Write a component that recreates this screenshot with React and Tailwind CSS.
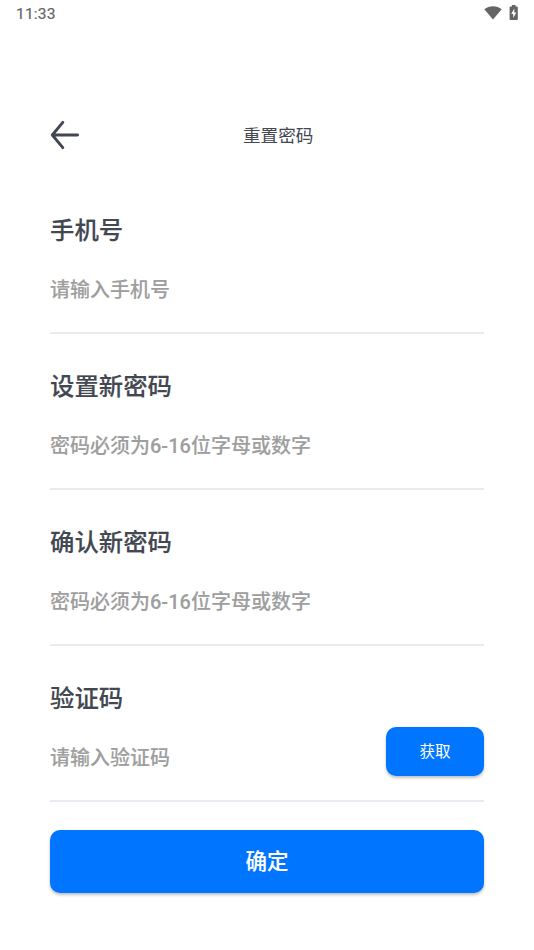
import React from "react";

const fields = [
  { label: "手机号", hint: "请输入手机号", line: "border-[#ebebeb]" },
  { label: "设置新密码", hint: "密码必须为6-16位字母或数字", line: "border-[#e8ebef]" },
  { label: "确认新密码", hint: "密码必须为6-16位字母或数字", line: "border-[#ebebed]" },
  { label: "验证码", hint: "请输入验证码", line: "border-[#e9eaf2]", action: "获取" },
];

function StatusBar() {
  return (
    <div className="flex h-7 items-center justify-between pl-4 pr-[15px] text-[#646464]">
      <span className="text-[15.5px] leading-7 font-normal tracking-[0.2px] [-webkit-text-stroke:0.2px]">11:33</span>
      <div className="flex items-start gap-[7px] pb-[2px]">
        <svg className="mt-[1px]" width="18" height="14" viewBox="0 0 18 14" fill="currentColor">
          <path d="M0.3 3.3C5.2-.8 12.800-.8 17.700 3.300L9 13.500Z" />
        </svg>
        <svg width="10" height="16" viewBox="0 0 10 16">
          <path
            d="M2.900 0h3.600v1.600H8q.8 0 .8 .8v11.800q0 .8-.8 .8H1.400q-.8 0-.8-.8V2.400q0-.8.8-.8h1.500Z"
            fill="currentColor"
          />
          <path d="M5.300 3.500 2.200 9h2v4l3.100-5.600h-2Z" fill="#fff" />
        </svg>
      </div>
    </div>
  );
}

function Field({ label, hint, line, action }) {
  return (
    <section className={`flex h-[156px] flex-col border-b-2 pt-[33px] ${line}`}>
      <label className="h-10 text-[24.4px] leading-10 font-medium text-[#424752] [-webkit-text-stroke:0.15px]">
        {label}
      </label>
      <div className="mt-[19px] flex h-10 items-center justify-between">
        <span className="text-[20px] leading-10 font-medium text-[#9e9e9e] [-webkit-text-stroke:0.1px]">{hint}</span>
        {action && (
          <button className="-mt-[13px] h-[49px] w-[98px] rounded-[10px] bg-[#0075ff] pt-[2px] text-[15.6px] leading-[47px] text-white shadow-[0_2px_3px_rgba(0,0,0,0.25)]">
            {action}
          </button>
        )}
      </div>
    </section>
  );
}

export default function App() {
  return (
    <div className="h-[950px] w-[534px] overflow-hidden bg-white font-[Roboto,'Noto_Sans_CJK_SC',sans-serif]">
      <StatusBar />
      <main className="px-[50px]">
        <header className="mt-[87px] flex h-10 items-center">
          <svg
            width="30"
            height="30"
            viewBox="0 0 30 30"
            fill="none"
            stroke="#424752"
            strokeWidth="2.9"
            strokeLinecap="round"
            strokeLinejoin="round"
          >
            <path d="M12.800 2.300 2.300 15l10.500 12.700M2.300 15h25.300" />
          </svg>
          <h1 className="ml-[163px] pt-[2px] text-[17.6px] leading-10 text-[#424752]">重置密码</h1>
        </header>
        <div className="mt-[23px]">
          {fields.map((field) => (
            <Field key={field.label} {...field} />
          ))}
        </div>
        <button className="mt-[28px] h-[63px] w-full rounded-[10px] bg-[#0075ff] text-[21.5px] leading-[63px] font-medium text-white shadow-[0_2px_3px_rgba(0,0,0,0.25)] [-webkit-text-stroke:0.15px]">
          确定
        </button>
      </main>
    </div>
  );
}
